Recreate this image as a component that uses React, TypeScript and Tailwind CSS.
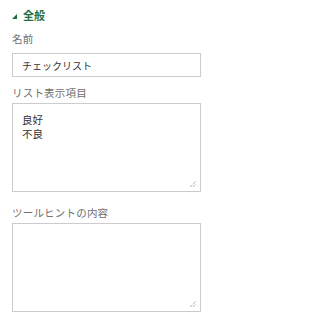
import React from "react";

const font = { fontFamily: '"Noto Sans CJK JP", "Noto Sans", sans-serif' };

function Label({ children }: { children: React.ReactNode }) {
  return <div className="text-[10.5px] leading-4 text-[#707070] tracking-[0.2px]">{children}</div>;
}

function Grip() {
  return (
    <svg className="absolute right-[3px] bottom-[3px]" width="8" height="8" viewBox="0 0 8 8">
      <path d="M1 7 L7 1 M4 7 L7 4" stroke="#888" strokeWidth="1" strokeDasharray="1 1" />
    </svg>
  );
}

export default function App() {
  return (
    <div className="w-[211px] h-[323px] bg-white pl-[12px] pr-[10px] pt-[7px]" style={font}>
      <div className="flex items-center gap-[6px] h-4">
        <svg width="5" height="5" viewBox="0 0 5 5" className="mt-[3px]">
          <polygon points="5,0 5,5 0,5" fill="#1e6e3c" />
        </svg>
        <span className="text-[11px] font-bold text-[#1e7145] leading-4">全般</span>
      </div>

      <div className="mt-[8px]">
        <Label>名前</Label>
      </div>
      <div className="mt-[6px] h-[24px] border border-[#cccccc] flex items-center pl-[9px] text-[10px] text-[#333]">
        チェックリスト
      </div>

      <div className="mt-[8px]">
        <Label>リスト表示項目</Label>
      </div>
      <div className="relative mt-[2px] h-[89px] border border-[#cccccc] pl-[9px] pt-[9px] text-[10.5px] leading-[14px] text-[#333]">
        <div>良好</div>
        <div>不良</div>
        <Grip />
      </div>

      <div className="mt-[13px]">
        <Label>ツールヒントの内容</Label>
      </div>
      <div className="relative mt-[2px] h-[89px] border border-[#cccccc]">
        <Grip />
      </div>
    </div>
  );
}
